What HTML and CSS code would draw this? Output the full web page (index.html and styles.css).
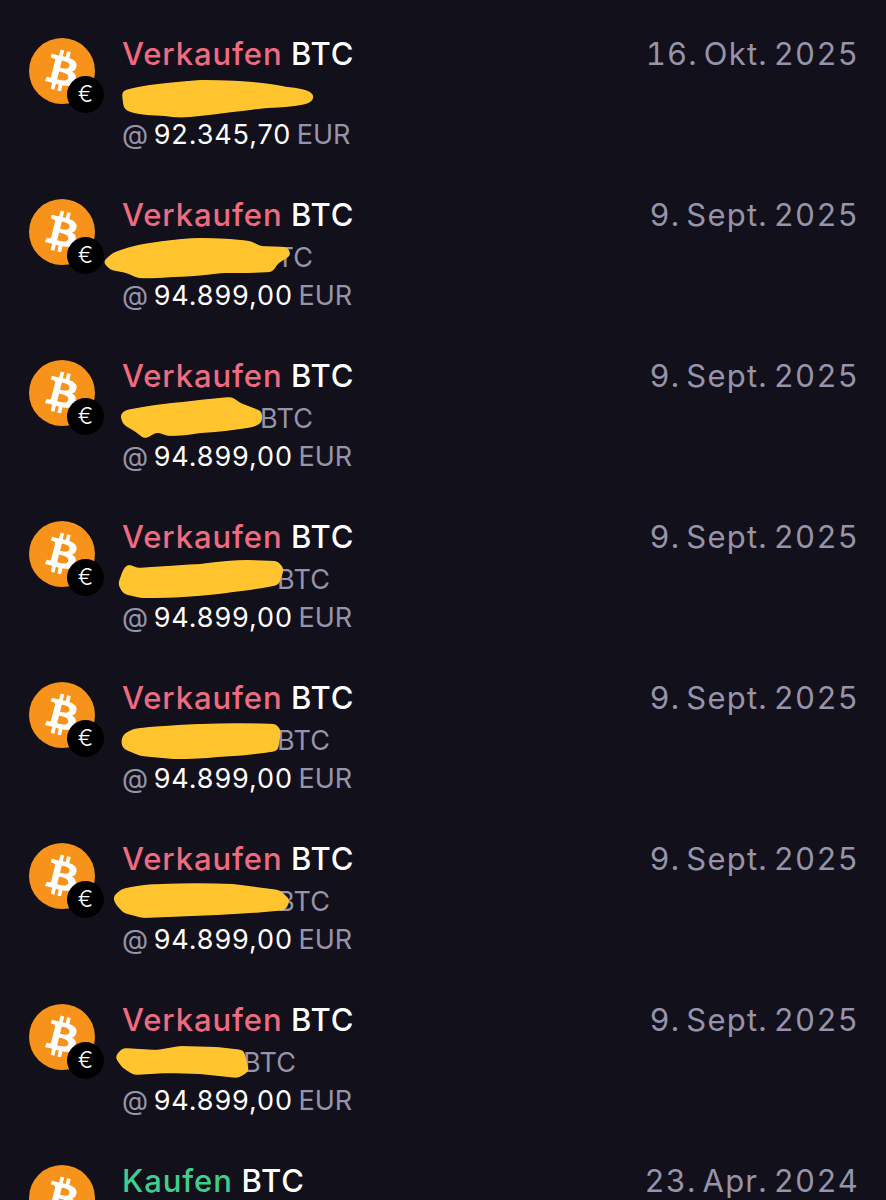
FILE: index.html
```html
<!DOCTYPE html>
<html lang="de">
<head>
  <meta charset="UTF-8">
  <meta name="viewport" content="width=device-width, initial-scale=1.0">
  <title>Bestellungen</title>
  <link rel="stylesheet" href="styles.css">
</head>
<body>
  <svg width="0" height="0" class="defs">
    <symbol id="btc" viewBox="0 0 24 24">
      <circle cx="12" cy="12" r="12" fill="#f7931a"/>
      <path fill="#fff" d="M17.288 10.291c.24-1.59-.974-2.45-2.64-3.03l.54-2.153-1.315-.33-.525 2.107c-.345-.087-.705-.167-1.064-.25l.526-2.127-1.32-.33-.54 2.165c-.285-.067-.565-.132-.84-.2l-1.815-.45-.35 1.407s.975.225.955.236c.535.136.63.486.615.766l-1.477 5.92c-.075.166-.24.406-.614.314.015.02-.96-.24-.96-.24l-.66 1.51 1.71.426.93.242-.54 2.19 1.32.327.54-2.17c.36.1.705.19 1.05.273l-.51 2.154 1.32.33.545-2.19c2.24.427 3.93.257 4.64-1.774.57-1.637-.03-2.58-1.217-3.196.854-.193 1.5-.76 1.68-1.93h.01zm-3.01 4.22c-.404 1.64-3.157.75-4.05.53l.72-2.9c.896.23 3.757.67 3.33 2.37zm.41-4.24c-.37 1.49-2.662.735-3.405.55l.654-2.64c.744.18 3.137.52 2.75 2.084v.006z"/>
    </symbol>
  </svg>

  <div class="orders">
    <div class="order">
      <div class="coin">
        <svg class="coin-logo"><use href="#btc"/></svg>
        <span class="quote">€</span>
      </div>
      <div class="info">
        <div class="title"><span class="sell">Verkaufen</span> BTC</div>
        <div class="amount"><span class="hidden-amount w-190"></span></div>
        <div class="price">@ <b>92.345,70</b> EUR</div>
      </div>
      <div class="date">16. Okt. 2025</div>
    </div>

    <div class="order">
      <div class="coin">
        <svg class="coin-logo"><use href="#btc"/></svg>
        <span class="quote">€</span>
      </div>
      <div class="info">
        <div class="title"><span class="sell">Verkaufen</span> BTC</div>
        <div class="amount"><span class="hidden-amount w-138"></span>BTC</div>
        <div class="price">@ <b>94.899,00</b> EUR</div>
      </div>
      <div class="date">9. Sept. 2025</div>
    </div>

    <div class="order">
      <div class="coin">
        <svg class="coin-logo"><use href="#btc"/></svg>
        <span class="quote">€</span>
      </div>
      <div class="info">
        <div class="title"><span class="sell">Verkaufen</span> BTC</div>
        <div class="amount"><span class="hidden-amount w-138"></span>BTC</div>
        <div class="price">@ <b>94.899,00</b> EUR</div>
      </div>
      <div class="date">9. Sept. 2025</div>
    </div>

    <div class="order">
      <div class="coin">
        <svg class="coin-logo"><use href="#btc"/></svg>
        <span class="quote">€</span>
      </div>
      <div class="info">
        <div class="title"><span class="sell">Verkaufen</span> BTC</div>
        <div class="amount"><span class="hidden-amount w-155"></span>BTC</div>
        <div class="price">@ <b>94.899,00</b> EUR</div>
      </div>
      <div class="date">9. Sept. 2025</div>
    </div>

    <div class="order">
      <div class="coin">
        <svg class="coin-logo"><use href="#btc"/></svg>
        <span class="quote">€</span>
      </div>
      <div class="info">
        <div class="title"><span class="sell">Verkaufen</span> BTC</div>
        <div class="amount"><span class="hidden-amount w-155"></span>BTC</div>
        <div class="price">@ <b>94.899,00</b> EUR</div>
      </div>
      <div class="date">9. Sept. 2025</div>
    </div>

    <div class="order">
      <div class="coin">
        <svg class="coin-logo"><use href="#btc"/></svg>
        <span class="quote">€</span>
      </div>
      <div class="info">
        <div class="title"><span class="sell">Verkaufen</span> BTC</div>
        <div class="amount"><span class="hidden-amount w-155"></span>BTC</div>
        <div class="price">@ <b>94.899,00</b> EUR</div>
      </div>
      <div class="date">9. Sept. 2025</div>
    </div>

    <div class="order">
      <div class="coin">
        <svg class="coin-logo"><use href="#btc"/></svg>
        <span class="quote">€</span>
      </div>
      <div class="info">
        <div class="title"><span class="sell">Verkaufen</span> BTC</div>
        <div class="amount"><span class="hidden-amount w-121"></span>BTC</div>
        <div class="price">@ <b>94.899,00</b> EUR</div>
      </div>
      <div class="date">9. Sept. 2025</div>
    </div>

    <div class="order">
      <div class="coin">
        <svg class="coin-logo"><use href="#btc"/></svg>
      </div>
      <div class="info">
        <div class="title"><span class="buy">Kaufen</span> BTC</div>
      </div>
      <div class="date">23. Apr. 2024</div>
    </div>
  </div>

  <!-- marker scribbles painted over the amounts -->
  <svg class="marker" viewBox="0 0 886 1200">
    <filter id="marker-edge" filterUnits="userSpaceOnUse" x="0" y="0" width="886" height="1200" color-interpolation-filters="sRGB">
      <feGaussianBlur stdDeviation="2.5"/>
      <feColorMatrix values="1 0 0 0 0  0 1 0 0 0  0 0 1 0 0  0 0 0 7 -3"/>
    </filter>
    <g filter="url(#marker-edge)">
      <path d="M123 92C135 87 160 84 200 81C235 81 265 83 287 88C300 89 313 91 313 97C313 103 300 106 267 107C240 110 220 113 200 115C185 117 175 117 165 115C150 114 140 115 128 110C122 108 125 100 123 96Z"/>
      <path d="M104 262L113 254C125 249 135 246 150 244C170 241 185 239 200 239C220 239 235 240 250 242L260 247L287 248L290 255L277 263L272 271C255 272 240 272 223 272C205 274 190 276 173 276C160 277 150 278 138 277L127 272L111 269Z"/>
      <path d="M121 415L126 411L143 408C155 406 170 404 183 403C200 401 215 399 232 398L240 404L261 412L261 422L253 426C235 429 220 431 200 432C190 434 178 435 168 435L157 431L145 438L136 431L124 424Z"/>
      <path d="M124 570L128 565L137 569C155 568 180 566 200 565C215 563 232 561 247 561L277 562L283 569L278 584C265 587 250 589 233 591C215 594 200 595 183 596C170 597 155 597 141 597L124 593L119 584Z"/>
      <path d="M124 735L133 730C155 727 178 726 200 725C225 724 250 724 276 725L280 731L277 750C260 753 240 755 217 756C200 758 188 758 173 758L141 755L124 748L122 742Z"/>
      <path d="M114 897L122 890C135 887 148 885 160 885C185 884 210 884 233 885L279 891L289 900L285 909C260 912 240 913 217 914C195 915 170 916 143 917L124 912L116 903Z"/>
      <path d="M116 1057L123 1049L157 1051L180 1047L217 1048L243 1051L248 1071L238 1077L200 1073L167 1072L134 1074L123 1067Z"/>
    </g>
  </svg>
</body>
</html>
```

FILE: styles.css
```css
html, body {
  margin: 0;
  height: 1200px;
  overflow: hidden;
}
body {
  position: relative;
  background: #12101a;
  color: #fff;
  font-family: Inter, "Liberation Sans", sans-serif;
}
.defs {
  display: block;
}
.orders {
  padding: 34px 28px 0 29px;
}
.order {
  display: flex;
  height: 161px;
}
.coin {
  position: relative;
  flex: none;
  width: 66px;
  height: 66px;
  margin-top: 4px;
  margin-right: 27px;
}
.coin-logo {
  display: block;
  width: 66px;
  height: 66px;
}
.quote {
  position: absolute;
  left: 38px;
  top: 38px;
  width: 37px;
  height: 37px;
  line-height: 36px;
  border-radius: 50%;
  background: #000;
  color: #fff;
  text-align: center;
  font-size: 23px;
  font-weight: 300;
}
.info {
  flex: 1;
}
.title {
  font-size: 31px;
  font-weight: 500;
  letter-spacing: 0.9px;
  word-spacing: -0.5px;
  line-height: 40px;
}
.sell {
  color: #ee6b82;
}
.buy {
  color: #3ecf8e;
}
.amount {
  margin-top: 4px;
  font-size: 27px;
  letter-spacing: 0.3px;
  line-height: 38px;
  color: #9694aa;
}
.hidden-amount {
  display: inline-block;
}
.w-190 { width: 190px; }
.w-155 { width: 155px; }
.w-138 { width: 138px; }
.w-121 { width: 121px; }
.price {
  font-size: 27px;
  word-spacing: -2px;
  line-height: 38px;
  color: #9694aa;
}
.price b {
  font-weight: 400;
  letter-spacing: 0.9px;
  color: #fff;
}
.date {
  flex: none;
  margin-right: -1px;
  font-size: 31px;
  font-variant-numeric: tabular-nums;
  letter-spacing: 1.2px;
  word-spacing: -3.5px;
  line-height: 40px;
  color: #9694aa;
}
.marker {
  position: absolute;
  left: 0;
  top: 0;
  width: 886px;
  height: 1200px;
  fill: #ffc42e;
  stroke: #ffc42e;
  stroke-width: 2;
  stroke-linejoin: round;
}
```
